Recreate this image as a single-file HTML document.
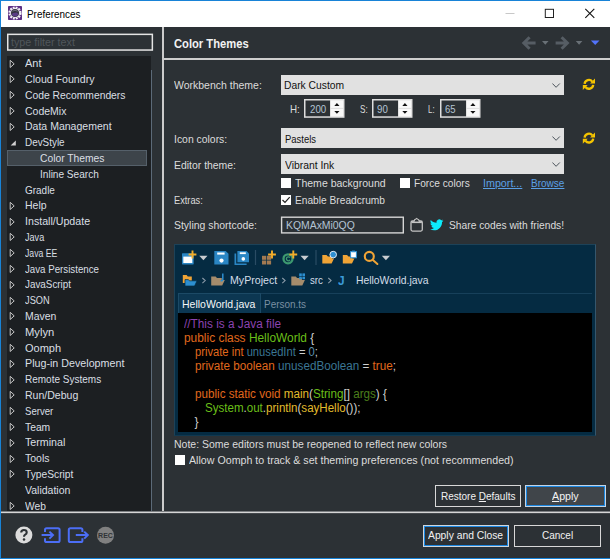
<!DOCTYPE html>
<html><head><meta charset="utf-8"><title>Preferences</title>
<style>
html,body{margin:0;padding:0;}
body{width:610px;height:559px;overflow:hidden;background:#2c3135;font-family:"Liberation Sans",sans-serif;font-size:11px;color:#dcdcdc;position:relative;}
#win{position:absolute;left:0;top:0;width:610px;height:559px;overflow:hidden;background:#2c3135;}
.abs,#win div,#win span,#win svg{position:absolute;}
#win span.i{position:static;}
.t{white-space:nowrap;line-height:14px;height:14px;}
#titlebar{left:0;top:0;width:610px;height:27px;background:#fff;}
#btop{left:0;top:0;width:610px;height:1px;background:#1883d7;}
#bleft{left:0;top:0;width:1px;height:559px;background:#1883d7;}
#bbot{left:0;top:558px;width:610px;height:1px;background:#1883d7;}
#title{left:26px;top:7px;color:#000;font-size:12px;}
#filter{left:7px;top:34px;width:143px;height:14px;border:1.5px solid #e6e6e6;background:#2c3135;}
#filter .t{left:3px;top:0px;color:#5d6368;font-size:11px;}
#tree{left:7px;top:55.6px;width:144px;height:456px;background:#1c1f22;}
#treeline{left:151px;top:70px;width:1px;height:441px;background:#5c6a78;}
.ti{color:#dadfe4;}
.sel{left:7px;width:140px;height:15px;background:#3d444a;border:1px solid #55606a;box-sizing:border-box;height:16px;}
.arr{overflow:visible;}
#sash{left:162px;top:27px;width:2px;height:485px;background:#cbcbcb;}
#hline{left:164px;top:58px;width:446px;height:2px;background:#cecece;}
#bline{left:1px;top:511px;width:609px;height:3px;background:linear-gradient(to bottom,#7c7f82 0,#7c7f82 33.3%,#d6d6d6 33.3%,#d6d6d6 66.7%,#43474b 66.7%);}
#hdr{left:174px;top:37px;font-weight:bold;font-size:12px;color:#f0f0f0;}
.lbl{color:#dcdcdc;}.dk{color:#111;}.sp{color:#b4c4d4;}.bt{color:#f2f2f2;}.bc{color:#d4dee8;}
.t{transform-origin:0 50%;}
.combo{left:281px;width:283px;height:20px;background:#e1e1e1;}
.combo .t{left:5px;top:3px;color:#111;font-size:11px;}
.combo svg{left:271px;top:7.6px;}
.spin{width:40px;height:18px;box-sizing:border-box;border:1px solid #e0e0e0;background:#2c3135;}
.spin .t{left:4px;top:1px;color:#b4c4d4;font-size:11px;}
.spin .ud{left:26px;top:0px;width:12px;height:16px;background:#f0f0f0;}
.cb{width:10px;height:10px;background:#fff;}
.link{color:#5ba0e6;text-decoration:underline;}
.btn{box-sizing:border-box;height:22px;border:1px solid #d8d8d8;background:#2c3135;text-align:center;}
.btn .t{position:static !important;display:block;line-height:20px;height:20px;color:#f0f0f0;font-size:11px;}
#prev{left:174px;top:244px;width:422px;height:192px;background:#052b42;box-sizing:border-box;border:1px solid #1d4258;border-right-color:#35566c;border-bottom-color:#0f3850;}
#code{left:178px;top:313px;width:414px;height:119px;background:#000;}
.cl{color:#cfcfcf;}
.k{color:#e0691d}.cm{color:#8b43b0}.cn{color:#6abf19}.u{color:#3b7693}.y{color:#e2bc2c}.g{color:#8dc63f}.dg{color:#4c7f1c}.lg{color:#a6e36a}.nb{color:#5f90b0}
</style></head><body>
<div id="win">
<div id="titlebar"></div>
<div id="btop"></div><div id="bleft"></div><div id="bbot"></div>
<!-- title icon -->
<svg style="left:8px;top:6px" width="14" height="14" viewBox="0 0 14 14"><rect x="0" y="0" width="14" height="14" rx="0.8" fill="#5b2e84"/><circle cx="7" cy="7" r="5.6" fill="none" stroke="#f4f4f8" stroke-width="2" stroke-dasharray="1.9 1.03"/><circle cx="7" cy="7" r="4.9" fill="#f4f4f8"/><circle cx="7" cy="7" r="4" fill="#33323f"/><path d="M3.6 8.2 A3.6 3.6 0 0 0 10.4 8.2 L9 6.6 L5 6.9 Z" fill="#5a3d86"/><path d="M4.2 5.2 Q7 3.4 9.8 5.2" stroke="#8a8a98" stroke-width="0.7" fill="none"/></svg>
<!-- window controls -->
<svg style="left:500px;top:4px" width="105" height="20" viewBox="0 0 105 20">
<path d="M5.5 9.5 H14.5" stroke="#c8c8c8" stroke-width="1"/>
<rect x="45.3" y="5.3" width="8.2" height="8.2" fill="none" stroke="#222" stroke-width="1"/>
<path d="M85.3 4.8 L94.3 13.8 M94.3 4.8 L85.3 13.8" stroke="#111" stroke-width="1.1"/>
</svg>

<!-- left panel -->
<svg style="left:6px;top:33px" width="149" height="19" viewBox="6 33 149 19"><rect x="7.75" y="34.35" width="144.6" height="15.7" fill="#2c3135" stroke="#e4e4e4" stroke-width="1.5"/></svg>
<div id="tree"></div>
<div id="treeline"></div>
<svg class="arr" style="top:58.5px;left:9.3px" width="8" height="10" viewBox="0 0 8 10"><path d="M1.2 1.3 L5.2 4.9 L1.2 8.5 Z" fill="none" stroke="#c4c4c4" stroke-width="1"/></svg>
<div class="t ti" style="left:25.4px;top:56.1px;font-size:10.8px;transform:scaleX(1.0179);">Ant</div>
<svg class="arr" style="top:74.3px;left:9.3px" width="8" height="10" viewBox="0 0 8 10"><path d="M1.2 1.3 L5.2 4.9 L1.2 8.5 Z" fill="none" stroke="#c4c4c4" stroke-width="1"/></svg>
<div class="t ti" style="left:25.4px;top:71.9px;font-size:10.8px;transform:scaleX(0.9811);">Cloud Foundry</div>
<svg class="arr" style="top:90.1px;left:9.3px" width="8" height="10" viewBox="0 0 8 10"><path d="M1.2 1.3 L5.2 4.9 L1.2 8.5 Z" fill="none" stroke="#c4c4c4" stroke-width="1"/></svg>
<div class="t ti" style="left:25.4px;top:87.7px;font-size:10.8px;transform:scaleX(0.9567);">Code Recommenders</div>
<svg class="arr" style="top:105.9px;left:9.3px" width="8" height="10" viewBox="0 0 8 10"><path d="M1.2 1.3 L5.2 4.9 L1.2 8.5 Z" fill="none" stroke="#c4c4c4" stroke-width="1"/></svg>
<div class="t ti" style="left:25.4px;top:103.5px;font-size:10.8px;transform:scaleX(0.9715);">CodeMix</div>
<svg class="arr" style="top:121.7px;left:9.3px" width="8" height="10" viewBox="0 0 8 10"><path d="M1.2 1.3 L5.2 4.9 L1.2 8.5 Z" fill="none" stroke="#c4c4c4" stroke-width="1"/></svg>
<div class="t ti" style="left:25.4px;top:119.3px;font-size:10.8px;transform:scaleX(0.9746);">Data Management</div>
<svg class="arr" style="top:139.0px;left:9px" width="8" height="8" viewBox="0 0 8 8"><path d="M6.8 1.6 L6.8 6.6 L1.6 6.6 Z" fill="#d0d0d0"/></svg>
<div class="t ti" style="left:25.4px;top:135.1px;font-size:10.8px;transform:scaleX(0.9163);">DevStyle</div>
<div class="sel" style="top:149.8px"></div>
<div class="t ti" style="left:39.6px;top:150.9px;font-size:10.8px;transform:scaleX(0.9538);">Color Themes</div>
<div class="t ti" style="left:39.6px;top:166.7px;font-size:10.8px;transform:scaleX(0.9328);">Inline Search</div>
<div class="t ti" style="left:25.4px;top:182.5px;font-size:10.8px;transform:scaleX(0.9224);">Gradle</div>
<svg class="arr" style="top:200.7px;left:9.3px" width="8" height="10" viewBox="0 0 8 10"><path d="M1.2 1.3 L5.2 4.9 L1.2 8.5 Z" fill="none" stroke="#c4c4c4" stroke-width="1"/></svg>
<div class="t ti" style="left:25.4px;top:198.3px;font-size:10.8px;transform:scaleX(0.9725);">Help</div>
<svg class="arr" style="top:216.5px;left:9.3px" width="8" height="10" viewBox="0 0 8 10"><path d="M1.2 1.3 L5.2 4.9 L1.2 8.5 Z" fill="none" stroke="#c4c4c4" stroke-width="1"/></svg>
<div class="t ti" style="left:25.4px;top:214.1px;font-size:10.8px;transform:scaleX(0.9858);">Install/Update</div>
<svg class="arr" style="top:232.3px;left:9.3px" width="8" height="10" viewBox="0 0 8 10"><path d="M1.2 1.3 L5.2 4.9 L1.2 8.5 Z" fill="none" stroke="#c4c4c4" stroke-width="1"/></svg>
<div class="t ti" style="left:25.4px;top:229.9px;font-size:10.8px;transform:scaleX(0.8416);">Java</div>
<svg class="arr" style="top:248.1px;left:9.3px" width="8" height="10" viewBox="0 0 8 10"><path d="M1.2 1.3 L5.2 4.9 L1.2 8.5 Z" fill="none" stroke="#c4c4c4" stroke-width="1"/></svg>
<div class="t ti" style="left:25.4px;top:245.7px;font-size:10.8px;transform:scaleX(0.8031);">Java EE</div>
<svg class="arr" style="top:263.9px;left:9.3px" width="8" height="10" viewBox="0 0 8 10"><path d="M1.2 1.3 L5.2 4.9 L1.2 8.5 Z" fill="none" stroke="#c4c4c4" stroke-width="1"/></svg>
<div class="t ti" style="left:25.4px;top:261.5px;font-size:10.8px;transform:scaleX(0.8998);">Java Persistence</div>
<svg class="arr" style="top:279.7px;left:9.3px" width="8" height="10" viewBox="0 0 8 10"><path d="M1.2 1.3 L5.2 4.9 L1.2 8.5 Z" fill="none" stroke="#c4c4c4" stroke-width="1"/></svg>
<div class="t ti" style="left:25.4px;top:277.3px;font-size:10.8px;transform:scaleX(0.9123);">JavaScript</div>
<svg class="arr" style="top:295.5px;left:9.3px" width="8" height="10" viewBox="0 0 8 10"><path d="M1.2 1.3 L5.2 4.9 L1.2 8.5 Z" fill="none" stroke="#c4c4c4" stroke-width="1"/></svg>
<div class="t ti" style="left:25.4px;top:293.1px;font-size:10.8px;transform:scaleX(0.8575);">JSON</div>
<svg class="arr" style="top:311.3px;left:9.3px" width="8" height="10" viewBox="0 0 8 10"><path d="M1.2 1.3 L5.2 4.9 L1.2 8.5 Z" fill="none" stroke="#c4c4c4" stroke-width="1"/></svg>
<div class="t ti" style="left:25.4px;top:308.9px;font-size:10.8px;transform:scaleX(0.9687);">Maven</div>
<svg class="arr" style="top:327.1px;left:9.3px" width="8" height="10" viewBox="0 0 8 10"><path d="M1.2 1.3 L5.2 4.9 L1.2 8.5 Z" fill="none" stroke="#c4c4c4" stroke-width="1"/></svg>
<div class="t ti" style="left:25.4px;top:324.7px;font-size:10.8px;transform:scaleX(1.0389);">Mylyn</div>
<svg class="arr" style="top:342.9px;left:9.3px" width="8" height="10" viewBox="0 0 8 10"><path d="M1.2 1.3 L5.2 4.9 L1.2 8.5 Z" fill="none" stroke="#c4c4c4" stroke-width="1"/></svg>
<div class="t ti" style="left:25.4px;top:340.5px;font-size:10.8px;transform:scaleX(1.0193);">Oomph</div>
<svg class="arr" style="top:358.7px;left:9.3px" width="8" height="10" viewBox="0 0 8 10"><path d="M1.2 1.3 L5.2 4.9 L1.2 8.5 Z" fill="none" stroke="#c4c4c4" stroke-width="1"/></svg>
<div class="t ti" style="left:25.4px;top:356.3px;font-size:10.8px;transform:scaleX(0.9915);">Plug-in Development</div>
<svg class="arr" style="top:374.5px;left:9.3px" width="8" height="10" viewBox="0 0 8 10"><path d="M1.2 1.3 L5.2 4.9 L1.2 8.5 Z" fill="none" stroke="#c4c4c4" stroke-width="1"/></svg>
<div class="t ti" style="left:25.4px;top:372.1px;font-size:10.8px;transform:scaleX(0.9267);">Remote Systems</div>
<svg class="arr" style="top:390.3px;left:9.3px" width="8" height="10" viewBox="0 0 8 10"><path d="M1.2 1.3 L5.2 4.9 L1.2 8.5 Z" fill="none" stroke="#c4c4c4" stroke-width="1"/></svg>
<div class="t ti" style="left:25.4px;top:387.9px;font-size:10.8px;transform:scaleX(0.9755);">Run/Debug</div>
<svg class="arr" style="top:406.1px;left:9.3px" width="8" height="10" viewBox="0 0 8 10"><path d="M1.2 1.3 L5.2 4.9 L1.2 8.5 Z" fill="none" stroke="#c4c4c4" stroke-width="1"/></svg>
<div class="t ti" style="left:25.4px;top:403.7px;font-size:10.8px;transform:scaleX(0.8865);">Server</div>
<svg class="arr" style="top:421.9px;left:9.3px" width="8" height="10" viewBox="0 0 8 10"><path d="M1.2 1.3 L5.2 4.9 L1.2 8.5 Z" fill="none" stroke="#c4c4c4" stroke-width="1"/></svg>
<div class="t ti" style="left:25.4px;top:419.5px;font-size:10.8px;transform:scaleX(0.9542);">Team</div>
<svg class="arr" style="top:437.7px;left:9.3px" width="8" height="10" viewBox="0 0 8 10"><path d="M1.2 1.3 L5.2 4.9 L1.2 8.5 Z" fill="none" stroke="#c4c4c4" stroke-width="1"/></svg>
<div class="t ti" style="left:25.4px;top:435.3px;font-size:10.8px;transform:scaleX(0.9899);">Terminal</div>
<svg class="arr" style="top:453.5px;left:9.3px" width="8" height="10" viewBox="0 0 8 10"><path d="M1.2 1.3 L5.2 4.9 L1.2 8.5 Z" fill="none" stroke="#c4c4c4" stroke-width="1"/></svg>
<div class="t ti" style="left:25.4px;top:451.1px;font-size:10.8px;transform:scaleX(0.9717);">Tools</div>
<svg class="arr" style="top:469.3px;left:9.3px" width="8" height="10" viewBox="0 0 8 10"><path d="M1.2 1.3 L5.2 4.9 L1.2 8.5 Z" fill="none" stroke="#c4c4c4" stroke-width="1"/></svg>
<div class="t ti" style="left:25.4px;top:466.9px;font-size:10.8px;transform:scaleX(0.9486);">TypeScript</div>
<div class="t ti" style="left:25.4px;top:482.7px;font-size:10.8px;transform:scaleX(0.9736);">Validation</div>
<svg class="arr" style="top:500.9px;left:9.3px" width="8" height="10" viewBox="0 0 8 10"><path d="M1.2 1.3 L5.2 4.9 L1.2 8.5 Z" fill="none" stroke="#c4c4c4" stroke-width="1"/></svg>
<div class="t ti" style="left:25.4px;top:498.5px;font-size:10.8px;transform:scaleX(0.9495);">Web</div>
<div id="sash"></div>
<div id="hline"></div>
<div id="bline"></div>

<!-- header -->
<svg style="left:515px;top:30px" width="90" height="26" viewBox="515 30 90 26">
<path d="M529.6 37.2 L523.8 43 L529.6 48.8 M524.6 43 H535.6" fill="none" stroke="#565d64" stroke-width="3"/>
<path d="M561.6 37.2 L567.4 43 L561.6 48.8 M566.6 43 H555.6" fill="none" stroke="#565d64" stroke-width="3"/>
<path d="M542 41 H548.6 L545.3 44.7 Z M575.8 41 H582.4 L579.1 44.7 Z" fill="#697076"/>
<path d="M590.9 40.4 H599.5 L595.2 45 Z" fill="#5273fa"/>
</svg>

<!-- form -->
<div class="combo" style="top:75px"><svg width="9" height="6" viewBox="0 0 9 6"><path d="M0.4 0.5 L4.1 4.3 L7.8 0.5" fill="none" stroke="#4c545c" stroke-width="1"/></svg></div>
<svg style="left:304.3px;top:99.4px" width="41" height="19" viewBox="0 0 41 19"><rect x="0" y="0" width="40.5" height="18.8" fill="#dedede"/><rect x="1.5" y="1.5" width="24.5" height="15.8" fill="#2c3135"/><rect x="26.8" y="1.4" width="12.3" height="7.5" fill="#f8f8f8"/><rect x="26.8" y="9.9" width="12.3" height="7.5" fill="#f8f8f8"/><path d="M30.3 6.9 L32.9 4.1 L35.5 6.9 Z M30.3 11.9 L32.9 14.7 L35.5 11.9 Z" fill="#111"/></svg>
<svg style="left:372px;top:99.4px" width="41" height="19" viewBox="0 0 41 19"><rect x="0" y="0" width="40.5" height="18.8" fill="#dedede"/><rect x="1.5" y="1.5" width="24.5" height="15.8" fill="#2c3135"/><rect x="26.8" y="1.4" width="12.3" height="7.5" fill="#f8f8f8"/><rect x="26.8" y="9.9" width="12.3" height="7.5" fill="#f8f8f8"/><path d="M30.3 6.9 L32.9 4.1 L35.5 6.9 Z M30.3 11.9 L32.9 14.7 L35.5 11.9 Z" fill="#111"/></svg>
<svg style="left:439.6px;top:99.4px" width="41" height="19" viewBox="0 0 41 19"><rect x="0" y="0" width="40.5" height="18.8" fill="#dedede"/><rect x="1.5" y="1.5" width="24.5" height="15.8" fill="#2c3135"/><rect x="26.8" y="1.4" width="12.3" height="7.5" fill="#f8f8f8"/><rect x="26.8" y="9.9" width="12.3" height="7.5" fill="#f8f8f8"/><path d="M30.3 6.9 L32.9 4.1 L35.5 6.9 Z M30.3 11.9 L32.9 14.7 L35.5 11.9 Z" fill="#111"/></svg>

<div class="combo" style="top:128px;height:20px"><svg width="9" height="6" viewBox="0 0 9 6"><path d="M0.4 0.5 L4.1 4.3 L7.8 0.5" fill="none" stroke="#4c545c" stroke-width="1"/></svg></div>
<div class="combo" style="top:154px"><svg width="9" height="6" viewBox="0 0 9 6"><path d="M0.4 0.5 L4.1 4.3 L7.8 0.5" fill="none" stroke="#4c545c" stroke-width="1"/></svg></div>

<div class="cb" style="left:281px;top:178px"></div>
<div class="cb" style="left:400px;top:178px"></div>

<div class="cb" style="left:281px;top:195px"><svg style="left:0;top:0" width="10" height="10" viewBox="0 0 10 10"><path d="M1.5 5 L4 7.5 L8.7 2.2" fill="none" stroke="#222" stroke-width="1.2"/></svg></div>

<svg style="left:280px;top:216px" width="126" height="19" viewBox="280 216 126 19"><rect x="281.6" y="217.2" width="121.7" height="15.7" fill="#2c3135" stroke="#d6d6d6" stroke-width="1.4"/></svg>


<svg style="left:580px;top:70px" width="20" height="80" viewBox="580 70 20 80"><g transform="translate(588.9,84.3)"><path d="M-4.3 -0.5 A4.3 4.3 0 0 1 3.4 -2.7" fill="none" stroke="#f5c400" stroke-width="2.3"/><path d="M6.1 -5.7 L6.1 -0.7 L1.2 -0.7 Z" fill="#f5c400"/><path d="M4.3 0.5 A4.3 4.3 0 0 1 -3.4 2.7" fill="none" stroke="#f5c400" stroke-width="2.3"/><path d="M-6.1 5.7 L-6.1 0.7 L-1.2 0.7 Z" fill="#f5c400"/></g><g transform="translate(588.9,138.1)"><path d="M-4.3 -0.5 A4.3 4.3 0 0 1 3.4 -2.7" fill="none" stroke="#f5c400" stroke-width="2.3"/><path d="M6.1 -5.7 L6.1 -0.7 L1.2 -0.7 Z" fill="#f5c400"/><path d="M4.3 0.5 A4.3 4.3 0 0 1 -3.4 2.7" fill="none" stroke="#f5c400" stroke-width="2.3"/><path d="M-6.1 5.7 L-6.1 0.7 L-1.2 0.7 Z" fill="#f5c400"/></g></svg>
<svg style="left:408px;top:216px" width="38" height="18" viewBox="408 216 38 18">
<rect x="411" y="221" width="11.3" height="10.1" rx="1.5" fill="none" stroke="#c4c4c4" stroke-width="1.3"/><path d="M411.4 222.2 H421.9" stroke="#c4c4c4" stroke-width="1.8"/><path d="M414.3 221.6 V220.4 Q414.3 219.8 415 219.6 L416.65 218.5 L418.3 219.6 Q419 219.8 419 220.4 V221.6" fill="#2c3135" stroke="#c4c4c4" stroke-width="1.1"/>
<g transform="translate(429.9,218.1) scale(0.5625)"><path fill="#0cecfc" d="M23.953 4.57a10 10 0 01-2.825.775 4.958 4.958 0 002.163-2.723c-.951.555-2.005.959-3.127 1.184a4.92 4.92 0 00-8.384 4.482C7.69 8.095 4.067 6.13 1.64 3.162a4.822 4.822 0 00-.666 2.475c0 1.71.87 3.213 2.188 4.096a4.904 4.904 0 01-2.228-.616v.06a4.923 4.923 0 003.946 4.827 4.996 4.996 0 01-2.212.085 4.936 4.936 0 004.604 3.417 9.867 9.867 0 01-6.102 2.105c-.39 0-.779-.023-1.17-.067a13.995 13.995 0 007.557 2.209c9.053 0 13.998-7.496 13.998-13.985 0-.21 0-.42-.015-.63A9.935 9.935 0 0024 4.59z"/></g>
</svg>
<svg style="left:10px;top:520px" width="110" height="32" viewBox="10 520 110 32">
<circle cx="23.9" cy="534.9" r="8.5" fill="#dcdcdc"/>
<path d="M21.2 532.6 Q21.2 530 23.9 530 Q26.7 530 26.7 532.4 Q26.7 533.8 25.2 534.6 Q24 535.3 24 536.8" fill="none" stroke="#2c3135" stroke-width="2.1"/><circle cx="24" cy="539.6" r="1.25" fill="#2c3135"/>
<path d="M45 532 V529.8 Q45 528.2 46.6 528.2 H58 Q59.6 528.2 59.6 529.8 V540.4 Q59.6 542 58 542 H46.6 Q45 542 45 540.4 V538.2" fill="none" stroke="#4c6ef5" stroke-width="2"/>
<path d="M41.6 535.1 H52.4 M49.4 531.6 L53 535.1 L49.4 538.6" fill="none" stroke="#4c6ef5" stroke-width="2"/>
<path d="M82.4 532 V529.8 Q82.4 528.2 80.8 528.2 H70.4 Q68.8 528.2 68.8 529.8 V540.4 Q68.8 542 70.4 542 H80.8 Q82.4 542 82.4 540.4 V538.2" fill="none" stroke="#4c6ef5" stroke-width="2"/>
<path d="M75.8 535.1 H87.2 M84.2 531.6 L87.8 535.1 L84.2 538.6" fill="none" stroke="#4c6ef5" stroke-width="2"/>
<circle cx="105.5" cy="535.2" r="8.5" fill="#808080"/>
<text x="105.5" y="537.6" text-anchor="middle" font-family="Liberation Sans, sans-serif" font-weight="bold" font-size="7" fill="#303336">REC</text>
</svg>
<!-- preview -->
<div id="prev"></div>
<div style="left:178px;top:293px;width:414px;height:20px;background:#052b42;border-top:1px solid #17405a;box-sizing:border-box"></div>
<div style="left:178px;top:293px;width:83px;height:20px;background:#0c3752;border:1px solid #1c4a66;border-bottom:none;box-sizing:border-box"></div>
<div id="code"></div>
<svg style="left:174px;top:244px" width="422" height="50" viewBox="174 244 422 50">
<!-- new -->
<rect x="182" y="253.3" width="11.7" height="11.1" rx="0.6" fill="#2a86c4"/><rect x="183.3" y="256.6" width="9" height="6.4" fill="#fff"/>
<path d="M192.5 250.6 V258.4 M188.6 254.5 H196.4" stroke="#f3ad2a" stroke-width="1.9"/>
<path d="M199.3 255.8 H207.5 L203.4 260.2 Z" fill="#c8ccd0"/>
<!-- save -->
<path d="M214.3 251 H225.7 L228.5 253.8 V264.4 H214.3 Z" fill="#2a86c4"/><rect x="217.2" y="252.5" width="7.4" height="2.1" fill="#fff"/><circle cx="221.5" cy="260.6" r="2.1" fill="#fff"/>
<!-- save all -->
<path d="M234.5 253.6 H236.2 V263.4 H246.6 V265 H234.5 Z" fill="#2a86c4"/>
<path d="M237.4 251 H246.5 L249 253.5 V262.3 H237.4 Z" fill="#2a86c4"/><rect x="239.8" y="252.3" width="6" height="1.8" fill="#fff"/><circle cx="243.3" cy="258.9" r="1.8" fill="#fff"/>
<path d="M255.5 250 V265 M316 250 V265" stroke="#2a4c64" stroke-width="1.2"/>
<!-- brown squares plus -->
<g fill="#a27a52"><rect x="262" y="255.8" width="4.2" height="4" /><rect x="266.9" y="255.8" width="4.2" height="4"/><rect x="262" y="260.5" width="4.2" height="4"/><rect x="266.9" y="260.5" width="4.2" height="4"/></g>
<path d="M272 250.6 V258.4 M268.1 254.5 H275.9" stroke="#f3ad2a" stroke-width="1.9"/>
<!-- green C -->
<circle cx="288" cy="258.8" r="4.5" fill="none" stroke="#3d9970" stroke-width="2.3"/><path d="M290 257.6 A2 2 0 1 0 290 260" fill="none" stroke="#3d9970" stroke-width="1.3"/>
<path d="M293.3 250.6 V258.4 M289.4 254.5 H297.2" stroke="#f3ad2a" stroke-width="1.9"/>
<path d="M300.5 255.8 H308.7 L304.6 260.2 Z" fill="#c8ccd0"/>
<!-- open folder + circle -->
<path d="M322.3 255 H326.5 L328 256.6 H332 V258.6 H334 L331.6 263.4 H322.3 Z" fill="#f0a436"/>
<circle cx="333.2" cy="254.6" r="3.3" fill="#2d8fd0" stroke="#dfe9f2" stroke-width="1"/>
<!-- folder + square -->
<path d="M342.8 255 H347 L348.5 256.6 H352.5 V258.6 H354.4 L352 263.4 H342.8 Z" fill="#f0a436"/>
<rect x="350.6" y="251.6" width="5.8" height="6.2" fill="#fff" stroke="#2d8fd0" stroke-width="1"/><rect x="352" y="250.6" width="3" height="1.6" fill="#2d8fd0"/>
<!-- magnifier -->
<circle cx="369.3" cy="256.4" r="4.5" fill="none" stroke="#f0a436" stroke-width="2.1"/><path d="M372.6 259.8 L377.4 264" stroke="#f0a436" stroke-width="2" stroke-linecap="round"/>
<path d="M381.8 255.8 H390 L385.9 260.2 Z" fill="#c8ccd0"/>
<!-- breadcrumb -->
<path d="M182.8 275 H186.6 L187.8 276.4 H191.8 V283 H182.8 Z" fill="#f0a436"/>
<path d="M185 279.6 H188.4 L189.4 280.8 H197 L194.6 286 H185 Z" fill="#2d8fd0" stroke="#052b42" stroke-width="0.7"/>
<path d="M202.4 278 L205.2 280.6 L202.4 283.2 M282.3 278 L285.1 280.6 L282.3 283.2 M328.3 278 L331.1 280.6 L328.3 283.2" fill="none" stroke="#8a9aa8" stroke-width="1.1"/>
<path d="M211.2 276.4 H215.6 L217 278 H221.8 V280 H224.8 L222.2 285.4 H211.2 Z" fill="#a58c6c"/>
<path d="M222.8 273.6 V279.6 Q222.8 281 220.6 280.8" fill="none" stroke="#2d8fd0" stroke-width="1.5"/>
<path d="M291.3 276.4 H295.7 L297.1 278 H301.9 V280 H304.9 L302.3 285.4 H291.3 Z" fill="#a58c6c"/>
<g fill="#2d8fd0"><rect x="299.2" y="273.4" width="2.6" height="2.6"/><rect x="302.4" y="273.4" width="2.6" height="2.6"/><rect x="299.2" y="276.6" width="2.6" height="2.6"/><rect x="302.4" y="276.6" width="2.6" height="2.6"/></g>
</svg>

<div class="cb" style="left:175px;top:455px"></div>

<!-- buttons -->
<div class="btn" style="left:435px;top:485px;width:86px"></div>
<div class="btn" style="left:525px;top:485px;width:81px;border-color:#c4d4e4;box-shadow:inset 0 0 0 1px #1a86e0;background:#40454a"></div>
<div class="btn" style="left:423px;top:524.6px;width:86px;border-color:#cfd6dc;box-shadow:inset 0 0 0 1px #1a86e0"></div>
<div class="btn" style="left:514px;top:524.6px;width:87px"></div>
<div class="t " style="left:26.5px;top:6.6px;font-size:10.8px;transform:scaleX(0.9188);color:#000;">Preferences</div>
<div class="t " style="left:10.8px;top:34.7px;font-size:10.8px;transform:scaleX(0.9949);color:#50565b;">type filter text</div>
<div class="t " style="left:173.9px;top:37.2px;font-size:11.9px;transform:scaleX(0.9414);font-weight:bold;color:#f2f2f2;">Color Themes</div>
<div class="t lbl" style="left:174.3px;top:77.9px;font-size:11px;transform:scaleX(0.9531);">Workbench theme:</div>
<div class="t dk" style="left:284.4px;top:77.9px;font-size:11px;transform:scaleX(0.9364);">Dark Custom</div>
<div class="t lbl" style="left:289.6px;top:101.8px;font-size:11px;transform:scaleX(0.8909);">H:</div>
<div class="t sp" style="left:309.6px;top:101.8px;font-size:11px;transform:scaleX(0.8827);">200</div>
<div class="t lbl" style="left:359.7px;top:101.8px;font-size:11px;transform:scaleX(0.7409);">S:</div>
<div class="t sp" style="left:377.4px;top:101.8px;font-size:11px;transform:scaleX(0.8827);">90</div>
<div class="t lbl" style="left:427.9px;top:101.8px;font-size:11px;transform:scaleX(0.7194);">L:</div>
<div class="t sp" style="left:445.0px;top:101.8px;font-size:11px;transform:scaleX(0.8663);">65</div>
<div class="t lbl" style="left:174.4px;top:131.9px;font-size:11px;transform:scaleX(0.9458);">Icon colors:</div>
<div class="t dk" style="left:284.5px;top:131.9px;font-size:11px;transform:scaleX(0.8594);">Pastels</div>
<div class="t lbl" style="left:174.4px;top:157.6px;font-size:11px;transform:scaleX(0.9477);">Editor theme:</div>
<div class="t dk" style="left:284.5px;top:157.6px;font-size:11px;transform:scaleX(0.9411);">Vibrant Ink</div>
<div class="t lbl" style="left:295.1px;top:175.5px;font-size:11px;transform:scaleX(0.9559);">Theme background</div>
<div class="t lbl" style="left:413.6px;top:175.5px;font-size:11px;transform:scaleX(0.9221);">Force colors</div>
<div class="t link" style="left:482.6px;top:175.5px;font-size:11px;transform:scaleX(0.9742);">Import...</div>
<div class="t link" style="left:530.7px;top:175.5px;font-size:11px;transform:scaleX(0.9106);">Browse</div>
<div class="t lbl" style="left:174.4px;top:192.8px;font-size:11px;transform:scaleX(0.8414);">Extras:</div>
<div class="t lbl" style="left:295.1px;top:192.8px;font-size:11px;transform:scaleX(0.9257);">Enable Breadcrumb</div>
<div class="t lbl" style="left:174.4px;top:217.6px;font-size:11px;transform:scaleX(0.9493);">Styling shortcode:</div>
<div class="t sp" style="left:285.9px;top:218.0px;font-size:11px;transform:scaleX(0.9460);">KQMAxMi0QQ</div>
<div class="t lbl" style="left:449.0px;top:217.6px;font-size:11px;transform:scaleX(0.9319);">Share codes with friends!</div>
<div class="t lbl" style="left:174.1px;top:436.9px;font-size:11px;transform:scaleX(0.9524);">Note: Some editors must be reopened to reflect new colors</div>
<div class="t lbl" style="left:188.7px;top:453.3px;font-size:11px;transform:scaleX(0.9688);">Allow Oomph to track &amp; set theming preferences (not recommended)</div>
<div class="t bt" style="left:440.6px;top:488.9px;font-size:11px;transform:scaleX(0.9081);">Restore <u>D</u>efaults</div>
<div class="t bt" style="left:551.5px;top:488.9px;font-size:11px;transform:scaleX(0.9703);"><u>A</u>pply</div>
<div class="t bt" style="left:428.4px;top:528.4px;font-size:11px;transform:scaleX(0.9375);">Apply and Close</div>
<div class="t bt" style="left:541.5px;top:528.4px;font-size:11px;transform:scaleX(0.9083);">Cancel</div>
<div class="t bc" style="left:229.6px;top:272.8px;font-size:11px;transform:scaleX(0.9673);">MyProject</div>
<div class="t bc" style="left:309.5px;top:272.8px;font-size:11px;transform:scaleX(0.8798);">src</div>
<div class="t " style="left:337.6px;top:273.8px;font-size:12.6px;transform:scaleX(0.9418);font-weight:bold;color:#3a9ad8;">J</div>
<div class="t bc" style="left:356.2px;top:272.8px;font-size:11px;transform:scaleX(0.9424);">HelloWorld.java</div>
<div class="t " style="left:181.8px;top:296.9px;font-size:11px;transform:scaleX(0.9541);color:#f4f6f8;">HelloWorld.java</div>
<div class="t " style="left:263.5px;top:296.9px;font-size:11px;transform:scaleX(0.9039);color:#7a90a2;">Person.ts</div>
<div class="t cl" style="left:183.6px;top:316.6px;font-size:12px;transform:scaleX(0.9838);"><span class="i cm">//This is a Java file</span></div>
<div class="t cl" style="left:184.3px;top:330.8px;font-size:12px;transform:scaleX(0.9926);"><span class="i k">public class </span><span class="i cn">HelloWorld</span> {</div>
<div class="t cl" style="left:195.1px;top:344.8px;font-size:12px;transform:scaleX(0.9328);"><span class="i k">private int </span><span class="i u">unusedInt</span> = <span class="i nb">0</span>;</div>
<div class="t cl" style="left:195.1px;top:358.8px;font-size:12px;transform:scaleX(0.9729);"><span class="i k">private boolean </span><span class="i u">unusedBoolean</span> = <span class="i k">true</span>;</div>
<div class="t cl" style="left:194.6px;top:387.0px;font-size:12px;transform:scaleX(0.9716);"><span class="i k">public static void </span><span class="i y">main</span>(<span class="i cn">String</span>[] <span class="i dg">args</span>) {</div>
<div class="t cl" style="left:205.4px;top:400.8px;font-size:12px;transform:scaleX(0.9629);"><span class="i cn">System</span>.<span class="i cn">out</span>.<span class="i y">println</span>(<span class="i y">sayHello</span>());</div>
<div class="t cl" style="left:194.6px;top:414.8px;font-size:12px;">}</div>
</div>
</body></html>
